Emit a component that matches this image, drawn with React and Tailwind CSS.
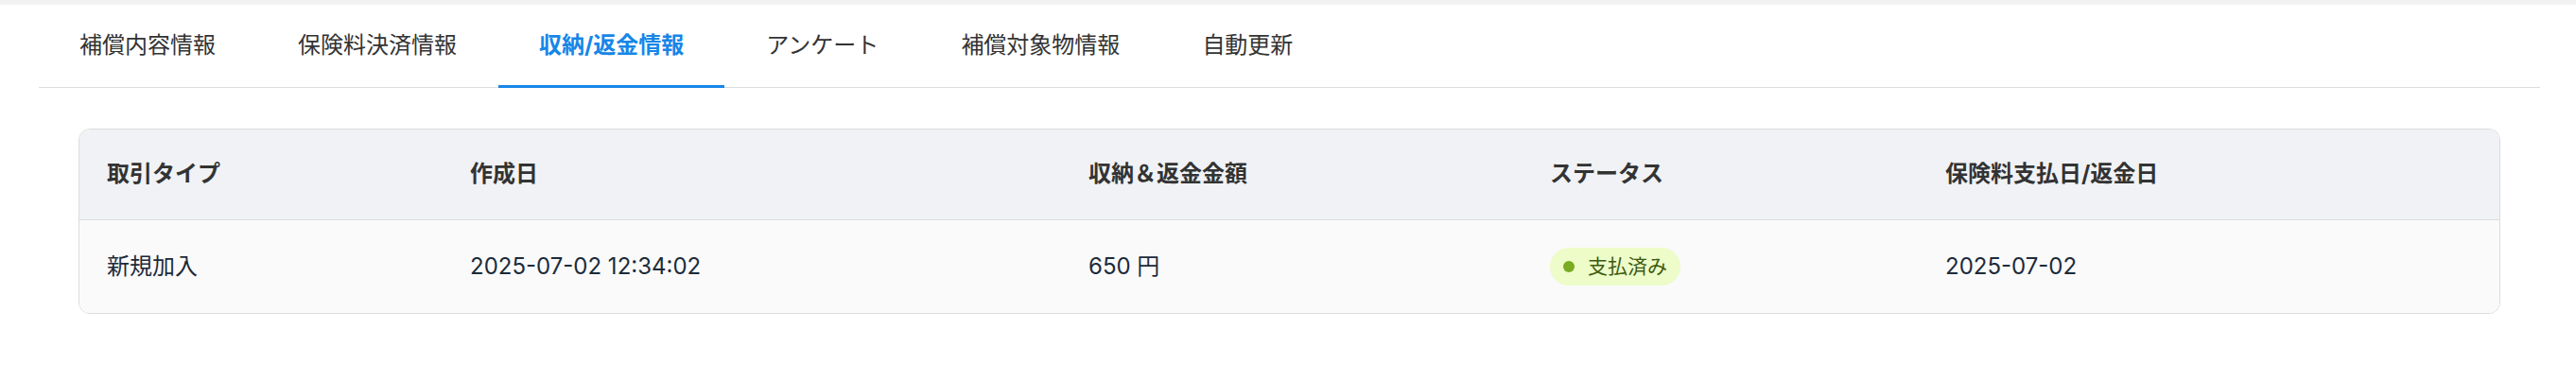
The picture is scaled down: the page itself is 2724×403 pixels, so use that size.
const tabs = ["補償内容情報", "保険料決済情報", "収納/返金情報", "アンケート", "補償対象物情報", "自動更新"];
const activeTab = 2;

const columns = ["取引タイプ", "作成日", "収納＆返金金額", "ステータス", "保険料支払日/返金日"];

const rows = [
  {
    type: "新規加入",
    created: "2025-07-02 12:34:02",
    amount: "650 円",
    status: "支払済み",
    paidOn: "2025-07-02",
  },
];

const font = { fontFamily: "Inter, 'Noto Sans CJK JP', sans-serif" };

export default function App() {
  return (
    <div className="min-h-screen bg-white" style={font}>
      {/* top strip */}
      <div className="h-[5px] bg-[#f2f2f2]" />

      <div className="ml-[41px] mr-[38px]">
        {/* Tabs */}
        <div className="flex gap-[1px] border-b-[1.5px] border-[#dcdcdc]">
          {tabs.map((t, i) => (
            <button
              key={t}
              className={`h-[88px] px-[43px] text-[24px] leading-none -mb-[1.5px] border-b-[3px] ${
                i === activeTab
                  ? "border-[#1786e8] text-[#1786e8] font-bold"
                  : "border-transparent text-[#333333]"
              }`}
            >
              {t}
            </button>
          ))}
        </div>

        {/* Table card */}
        <div className="px-[42px] pt-[43px]">
          <div className="rounded-[12px] border-[1.5px] border-[#dcdcdc] overflow-hidden">
            <div className="grid grid-cols-[384px_654px_488px_418px_1fr] h-[96px] items-center bg-[#f0f2f5] border-b-[1.5px] border-[#dcdcdc]">
              {columns.map((c) => (
                <div key={c} className="px-[29px] text-[24px] font-bold text-[#333333]">
                  {c}
                </div>
              ))}
            </div>
            {rows.map((r) => (
              <div
                key={r.created}
                className="grid grid-cols-[384px_654px_488px_418px_1fr] h-[98px] items-center bg-[#fafafa] text-[24px] text-[#1c2b3a]"
              >
                <div className="px-[29px]">{r.type}</div>
                <div className="px-[29px]">{r.created}</div>
                <div className="px-[29px]">{r.amount}</div>
                <div className="px-[29px]">
                  <span className="inline-flex items-center gap-[14px] h-[40px] px-[14px] rounded-full bg-[#edfcc8] text-[21px] text-[#3d5a10]">
                    <span className="w-[12px] h-[12px] rounded-full bg-[#7aab22]" />
                    {r.status}
                  </span>
                </div>
                <div className="px-[29px]">{r.paidOn}</div>
              </div>
            ))}
          </div>
        </div>
      </div>
    </div>
  );
}
